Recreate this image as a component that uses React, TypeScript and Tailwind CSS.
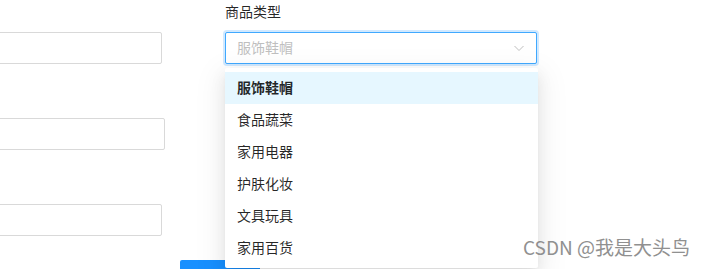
import { FC } from 'react';

const options = ['服饰鞋帽', '食品蔬菜', '家用电器', '护肤化妆', '文具玩具', '家用百货'];

const TextInput: FC<{ width: string }> = ({ width }) => (
  <div className={`h-8 ${width} rounded-[2px] border border-[#d9d9d9] bg-white`} />
);

const App: FC = () => {
  return (
    <div
      className="relative h-[269px] w-[708px] overflow-hidden bg-white text-[14px] text-[rgba(0,0,0,0.85)]"
      style={{ fontFamily: '"Noto Sans CJK SC", "Noto Sans", sans-serif' }}
    >
      <div className="flex">
        {/* left column */}
        <div className="-ml-[10px] flex w-[235px] shrink-0 flex-col pt-[32px]">
          <TextInput width="w-[172px]" />
          <div className="h-[54px]" />
          <TextInput width="w-[175px]" />
          <div className="h-[54px]" />
          <TextInput width="w-[172px]" />
          <div className="h-[24px]" />
          <div className="ml-[190px] h-8 w-[80px] rounded-[2px] bg-[#1890ff]" />
        </div>

        {/* right column */}
        <div className="relative w-[313px] shrink-0">
          <div className="h-[22px] leading-[22px]">商品类型</div>
          <div className="mt-[10px] flex h-8 w-[312px] items-center justify-between rounded-[2px] border border-[#40a9ff] bg-white pb-[1px] pl-[11px] pr-[11px] shadow-[0_0_0_2px_rgba(24,144,255,0.2)]">
            <span className="text-[#bfbfbf]">服饰鞋帽</span>
            <svg width="12" height="12" viewBox="0 0 12 12" fill="none" className="text-[#bfbfbf]">
              <path d="M1.5 4l4.5 4.5L10.5 4" stroke="currentColor" strokeWidth="1" />
            </svg>
          </div>

          <div className="absolute left-0 top-[68px] w-[313px] rounded-[2px] bg-white py-1 shadow-[0_3px_6px_-4px_rgba(0,0,0,0.12),0_6px_16px_0_rgba(0,0,0,0.08),0_9px_28px_8px_rgba(0,0,0,0.05)]">
            {options.map((opt, index) => (
              <div
                key={opt}
                className={`flex h-8 items-center px-3 pb-[2px] ${index === 0 ? 'bg-[#e6f7ff] font-semibold' : ''}`}
              >
                {opt}
              </div>
            ))}
          </div>
        </div>
      </div>

      <div className="absolute left-[523px] top-[235px] text-[19px] leading-[24px] text-[#909090] [text-shadow:0_0_1px_rgba(255,255,255,0.8)]">
        CSDN @我是大头鸟
      </div>
    </div>
  );
};

export default App;
